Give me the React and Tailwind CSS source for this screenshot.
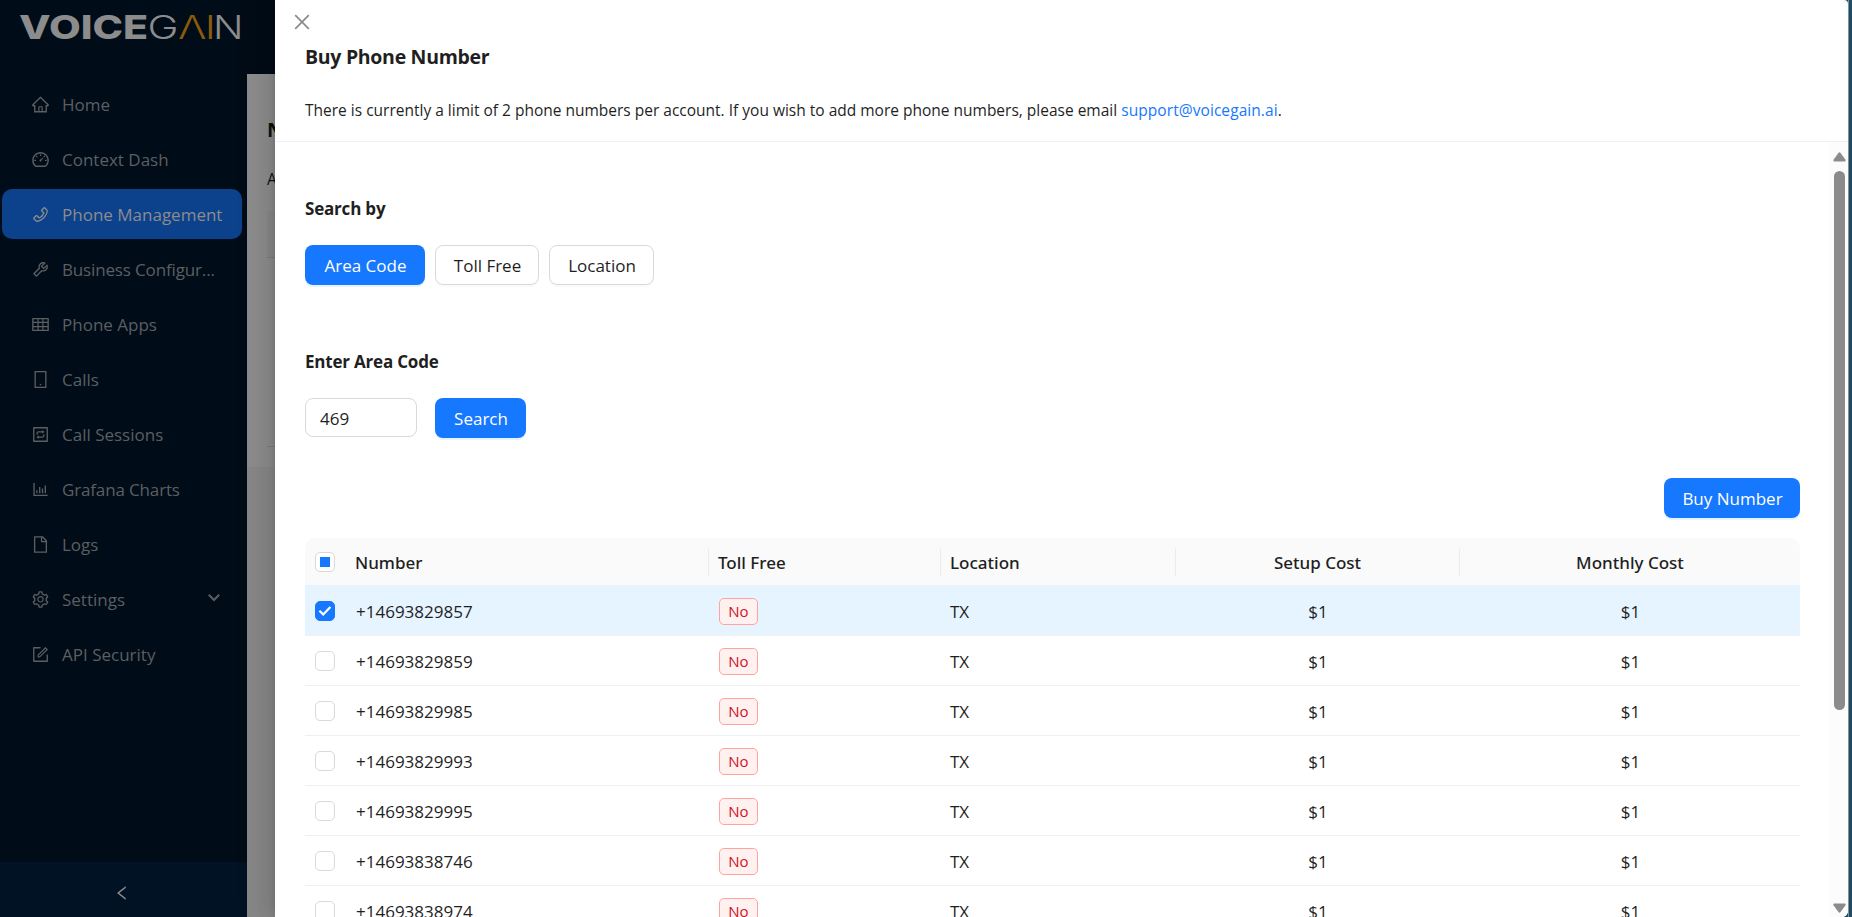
import React from "react";
import {
  AiOutlineHome,
  AiOutlineDashboard,
  AiOutlinePhone,
  AiOutlineTool,
  AiOutlineTable,
  AiOutlineInteraction,
  AiOutlineBarChart,
  AiOutlineFile,
  AiOutlineSetting,
  AiOutlineForm,
  AiOutlineLeft,
  AiOutlineClose,
} from "react-icons/ai";

function DeviceIcon({ className }) {
  return (
    <svg viewBox="0 0 19 19" fill="none" stroke="currentColor" strokeWidth="1.3" className={className}>
      <path d="M4.15 1.65h10.7v15.7H4.15z" />
      <circle cx="9.5" cy="14.6" r=".8" fill="currentColor" stroke="none" />
    </svg>
  );
}

const MENU = [
  { label: "Home", Icon: AiOutlineHome },
  { label: "Context Dash", Icon: AiOutlineDashboard },
  { label: "Phone Management", Icon: AiOutlinePhone, active: true },
  { label: "Business Configur...", Icon: AiOutlineTool, tight: true },
  { label: "Phone Apps", Icon: AiOutlineTable },
  { label: "Calls", Icon: DeviceIcon },
  { label: "Call Sessions", Icon: AiOutlineInteraction },
  { label: "Grafana Charts", Icon: AiOutlineBarChart, tight: true },
  { label: "Logs", Icon: AiOutlineFile },
  { label: "Settings", Icon: AiOutlineSetting, expandable: true },
  { label: "API Security", Icon: AiOutlineForm },
];

const NUMBERS = [
  "+14693829857",
  "+14693829859",
  "+14693829985",
  "+14693829993",
  "+14693829995",
  "+14693838746",
  "+14693838974",
];

const COLS = "grid grid-cols-[40px_363px_232px_235px_284px_341px] items-center";

function Logo() {
  return (
    <svg width="247" height="74" viewBox="0 0 247 74" className="block shrink-0 font-['Inter',sans-serif]">
      <text x="19" y="38.5" fontSize="32" fontWeight="800" fill="#8c8c8c" textLength="129" lengthAdjust="spacingAndGlyphs">
        VOICE
      </text>
      <g fontSize="32" fontWeight="300">
        <text x="147.5" y="38.5" fill="#8c8c8c" textLength="31" lengthAdjust="spacingAndGlyphs">G</text>
        <text x="178" y="38.5" fill="#8c5a0c" textLength="28.5" lengthAdjust="spacingAndGlyphs">Λ</text>
        <text x="206" y="38.5" fill="#8c5a0c" fontWeight="400">I</text>
        <text x="213" y="38.5" fill="#8c8c8c" textLength="30.5" lengthAdjust="spacingAndGlyphs">N</text>
      </g>
    </svg>
  );
}

function MenuItem({ label, Icon, active, expandable, tight }) {
  return (
    <div
      className={
        "ml-[2px] mr-[5px] flex h-[50px] items-center rounded-[10px] pl-[29px] pr-[21px] text-[17px] " +
        (active ? "bg-[#0c418c] text-[#8c8c8c]" : "text-[#5b5f63]")
      }
    >
      <Icon className="size-[19px] shrink-0" />
      <span className={"ml-[12px] grow whitespace-nowrap pt-[2px] " + (tight ? "tracking-[-0.15px]" : "")}>{label}</span>
      {expandable && (
        <svg width="14" height="10" viewBox="0 0 14 10" fill="none" stroke="currentColor" strokeWidth="2" className="mb-[3px]">
          <path d="M1.8 1.8 7 7l5.2-5.2" />
        </svg>
      )}
    </div>
  );
}

function Sidebar() {
  return (
    <aside className="flex w-[247px] shrink-0 flex-col bg-[#000c17]">
      <Logo />
      <nav className="flex grow flex-col gap-[5px] pt-[5px]">
        {MENU.map((m) => (
          <MenuItem key={m.label} {...m} />
        ))}
      </nav>
      <div className="flex h-[55px] items-center justify-center bg-[#001223] pr-[4px] pt-[6px] text-[#8c8c8c]">
        <AiOutlineLeft className="size-[18px]" />
      </div>
    </aside>
  );
}

function Backdrop() {
  return (
    <div className="flex w-[28px] shrink-0 flex-col overflow-hidden bg-[#878787] text-[#111111]">
      <div className="h-[74px] bg-[#000c17]" />
      <div className="h-[393px] bg-[#8c8c8c] pl-[20px]">
        <div className="pt-[42px] text-[20px] font-bold leading-[28px]">N</div>
        <div className="pt-[22px] text-[15.5px] leading-[26px]">A</div>
        <div className="mt-[19px] h-[47px] border-b border-[#7c7c7c] bg-[#888888]" />
        <div className="h-[189px] border-b border-[#7c7c7c]" />
      </div>
    </div>
  );
}

function Button({ children, primary, className }) {
  return (
    <button
      className={
        "flex h-10 items-center justify-center rounded-[8px] pl-px pt-px text-[17px] " +
        (primary
          ? "bg-[#1677ff] text-white shadow-[0_2px_0_rgba(5,145,255,0.1)] "
          : "border border-[#d9d9d9] bg-white text-[#1f1f1f] shadow-[0_2px_0_rgba(0,0,0,0.02)] ") +
        className
      }
    >
      {children}
    </button>
  );
}

function Checkbox({ checked, partial }) {
  return (
    <span
      className={
        "ml-[10px] flex size-5 items-center justify-center rounded-[5px] border " +
        (checked ? "border-[#1677ff] bg-[#1677ff]" : "border-[#d9d9d9] bg-white")
      }
    >
      {partial && <span className="size-[10px] bg-[#1677ff]" />}
      {checked && (
        <svg width="14" height="12" viewBox="0 0 14 12" fill="none" stroke="#fff" strokeWidth="2.2">
          <path d="M1.4 5.8 5.2 9.4 12.4 2" />
        </svg>
      )}
    </span>
  );
}

function HeaderCell({ children, center, first }) {
  return (
    <div
      className={
        "flex h-[28px] items-center pt-px " +
        (center ? "justify-center " : "") +
        (first ? "px-[10px]" : "border-l border-[#ececec] px-[9px]")
      }
    >
      {children}
    </div>
  );
}

function Table() {
  return (
    <div className="w-[1495px]">
      <div className={COLS + " h-12 rounded-t-[10px] border-b border-[#e6f4ff] bg-[#fafafa] pt-px font-['Noto_Sans',sans-serif] font-medium"}>
        <Checkbox partial />
        <HeaderCell first>Number</HeaderCell>
        <HeaderCell>Toll Free</HeaderCell>
        <HeaderCell>Location</HeaderCell>
        <HeaderCell center>Setup Cost</HeaderCell>
        <HeaderCell center>Monthly Cost</HeaderCell>
      </div>
      {NUMBERS.map((n, i) => (
        <div key={n} className={COLS + " h-[50px] border-b border-[#f0f0f0] pt-px " + (i === 0 ? "bg-[#e6f4ff]" : "")}>
          <Checkbox checked={i === 0} />
          <div className="pl-[11px] pt-px">{n}</div>
          <div className="px-[11px]">
            <span className="flex h-[27px] w-[39px] items-center justify-center rounded-[5px] border border-[#ffa39e] bg-[#fff1f0] text-[15px] text-[#cf1322]">
              No
            </span>
          </div>
          <div className="px-[10px] pt-px">TX</div>
          <div className="pl-[2px] pt-px text-center">$1</div>
          <div className="pl-[2px] pt-px text-center">$1</div>
        </div>
      ))}
    </div>
  );
}

function Scrollbar() {
  return (
    <div className="flex w-[18px] shrink-0 flex-col items-center bg-[#fcfcfc] pl-px pt-[10px]">
      <svg width="13" height="10" viewBox="0 0 13 10" fill="#8b8b8b" className="block shrink-0">
        <path d="M5.4 .9Q6.5-.5 7.6.9L12.5 7.8Q13 9.6 11.6 9.6H1.4Q0 9.6.5 7.8Z" />
      </svg>
      <div className="mt-[9px] h-[539px] w-[11px] shrink-0 rounded-full bg-[#8b8b8b]" />
      <svg width="13" height="10" viewBox="0 0 13 10" fill="#8b8b8b" className="mb-[4px] mt-auto block shrink-0">
        <path d="M5.4 9.1Q6.5 10.5 7.6 9.1L12.5 2.2Q13 .4 11.6.4H1.4Q0 .4.5 2.2Z" />
      </svg>
    </div>
  );
}

function Drawer() {
  return (
    <section className="relative z-10 flex grow flex-col overflow-hidden rounded-br-[6px] rounded-tr-[4px] bg-white shadow-[-6px_0_16px_0_rgba(0,0,0,0.08),-3px_0_6px_-4px_rgba(0,0,0,0.12),-9px_0_28px_8px_rgba(0,0,0,0.05)]">
      <header className="h-[142px] shrink-0 border-b border-[#f0f0f0] pl-[30px] pt-[11px]">
        <AiOutlineClose className="-ml-[14px] size-[22px] text-[#8c8c8c]" />
        <h1 className="mt-[9px] text-[19.5px] font-bold leading-[30px] tracking-[-0.3px]">Buy Phone Number</h1>
        <p className="mt-[26px] text-[15.5px] leading-6">
          There is currently a limit of 2 phone numbers per account. If you wish to add more phone numbers, please email{" "}
          <a className="tracking-[0.07px] text-[#1677ff]">support@voicegain.ai</a>.
        </p>
      </header>
      <div className="flex min-h-0 grow">
        <div className="flex grow flex-col overflow-hidden pl-[30px] pt-[53px]">
          <h2 className="text-[17px] font-bold leading-7 tracking-[-0.2px]">Search by</h2>
          <div className="mt-[22px] flex gap-[10px]">
            <Button primary className="w-[120px]">Area Code</Button>
            <Button className="w-[104px]">Toll Free</Button>
            <Button className="w-[105px]">Location</Button>
          </div>
          <h2 className="mt-[63px] text-[17px] font-bold leading-7 tracking-[-0.2px]">Enter Area Code</h2>
          <div className="mt-[22px] flex gap-[18px]">
            <div className="flex h-[39px] w-[112px] items-center rounded-[8px] border border-[#d9d9d9] pl-[14px] pt-[2px]">469</div>
            <Button primary className="w-[91px]">Search</Button>
          </div>
          <div className="mb-5 mt-10 flex w-[1495px] justify-end">
            <Button primary className="w-[136px]">Buy Number</Button>
          </div>
          <Table />
        </div>
        <Scrollbar />
      </div>
    </section>
  );
}

export default function App() {
  return (
    <div className="flex h-[917px] w-[1852px] overflow-hidden bg-[#234e66] font-['Open_Sans','Noto_Sans',sans-serif] text-[17px] leading-6 text-[#1f1f1f]">
      <Sidebar />
      <Backdrop />
      <Drawer />
      <div className="w-[4px] shrink-0 border-l border-[#7f98a5] bg-[#234e66]" />
    </div>
  );
}
